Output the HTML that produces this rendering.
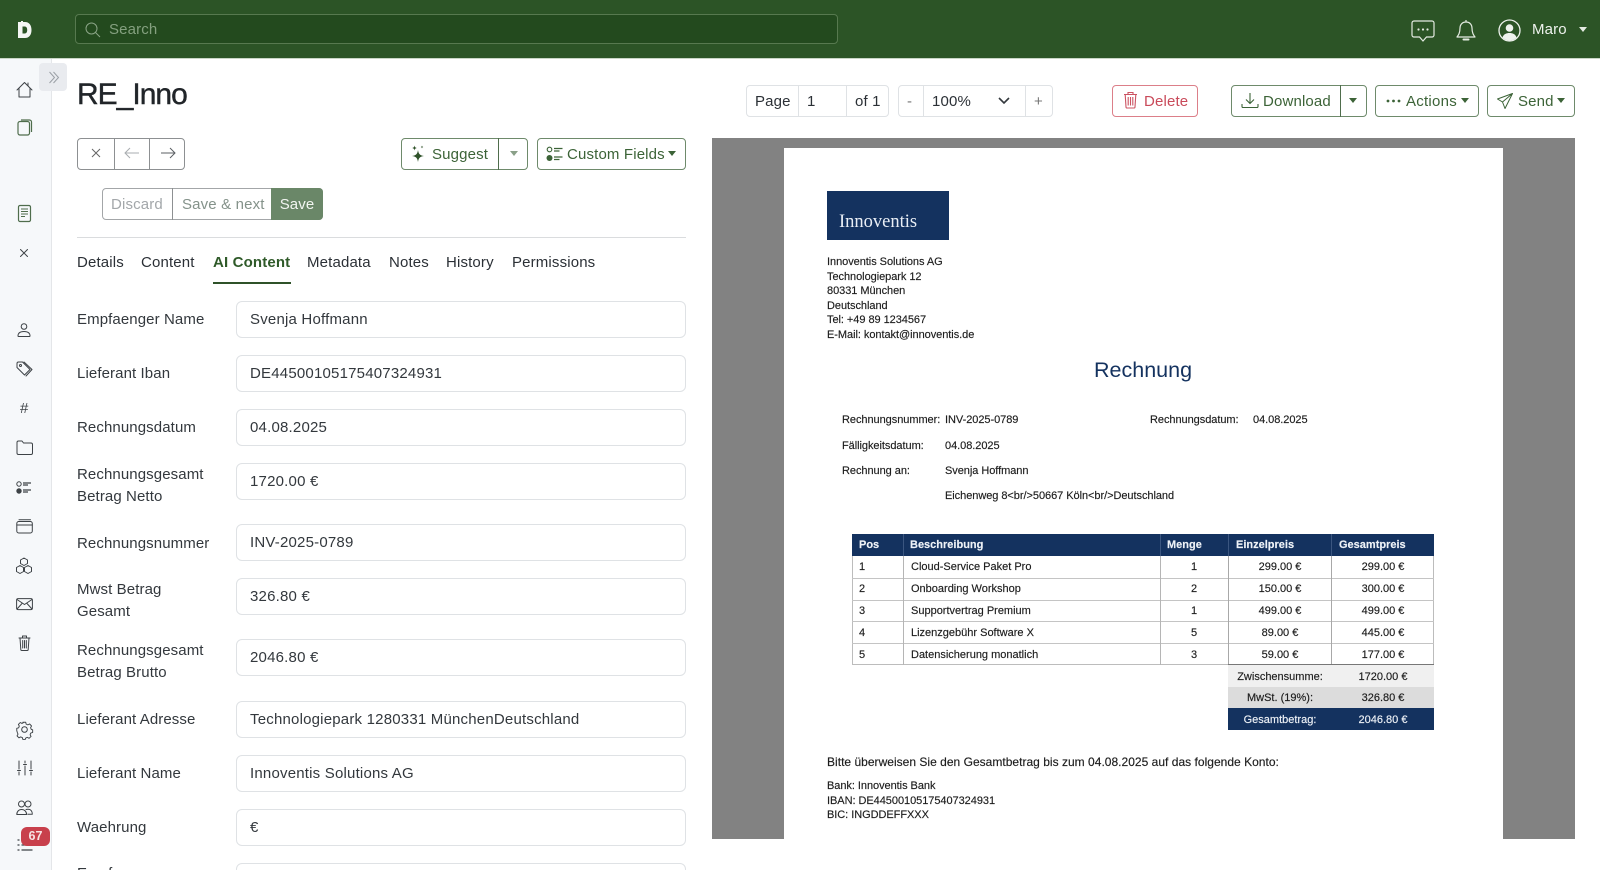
<!DOCTYPE html>
<html><head><meta charset="utf-8"><style>
*{box-sizing:border-box}
html,body{margin:0;padding:0;width:1600px;height:870px;overflow:hidden;background:#fff;font-family:"Liberation Sans",sans-serif;color:#2b3036}
#w{position:relative;width:1600px;height:870px;overflow:hidden;background:#fff}
.a{position:absolute;white-space:nowrap}
.t{position:absolute;white-space:nowrap;font-size:15px;line-height:20px;letter-spacing:.15px;margin-top:1px}
.tb{margin-top:.5px}
.b{position:absolute;border:1px solid #6e8a6b;border-radius:4px;background:#fff}
.g{color:#3c6337}
.lb{position:absolute;left:77px;font-size:15px;line-height:22px;letter-spacing:.1px;white-space:nowrap;color:#33383d;margin-top:.5px}
.in{position:absolute;left:236px;width:450px;height:37px;border:1px solid #dfe2e5;border-radius:6px;font-size:15px;line-height:36px;padding-left:13px;letter-spacing:.2px;color:#33383d;white-space:nowrap}
.p{position:absolute;white-space:nowrap;font-size:11px;line-height:14px;color:#1c1c1c;letter-spacing:-.05px;margin-top:.5px;-webkit-text-stroke:.15px #1c1c1c}
.tc{position:absolute;white-space:nowrap;font-size:11px;line-height:14px;color:#1c1c1c;margin-top:-.5px;-webkit-text-stroke:.15px currentColor}
.cen{text-align:center;transform:translateX(-50%)}
svg{position:absolute;fill:none;overflow:visible}
.s{stroke:#3d4246;stroke-width:1;stroke-linecap:round;stroke-linejoin:round}
.car{position:absolute;width:0;height:0;border-left:4.500px solid transparent;border-right:4.500px solid transparent;border-top:5px solid #3c6337}
.vl{position:absolute;width:1px}
</style></head><body><div id="w">

<!-- header -->
<div class="a" style="left:0;top:0;width:1600px;height:59px;background:#2c5426;border-bottom:1px solid #c9d6c6"></div>
<svg style="left:17px;top:21px" width="16" height="18" viewBox="0 0 16 18"><path fill="#f4f6f3" fill-rule="evenodd" d="M1 1h3V0h2v1h2c4 0 6.500 3 6.500 8s-2.500 8-6.500 8H1zM5.500 5.500v7H7.500c1.800 0 2.700-1.200 2.700-3.500S9.300 5.500 7.500 5.500z"/></svg>
<div class="a" style="left:75px;top:14px;width:763px;height:30px;background:#234a1e;border:1px solid #57794f;border-radius:4px"></div>
<svg style="left:85px;top:22px" width="16" height="16" viewBox="0 0 16 16"><circle cx="6.500" cy="6.500" r="5.500" stroke="#8ba587"/><path d="M10.500 10.500L15 15" stroke="#8ba587"/></svg>
<div class="t" style="left:109px;top:19px;color:#84a07f">Search</div>

<svg style="left:1411px;top:20px" width="24" height="22" viewBox="0 0 24 22"><path d="M3 1h18a2 2 0 0 1 2 2v12a2 2 0 0 1-2 2h-5.500L12 21l-3.500-4H3a2 2 0 0 1-2-2V3a2 2 0 0 1 2-2z" stroke="#e4ebe2" stroke-width="1.200"/><circle cx="7.500" cy="9.500" r="1.100" fill="#e4ebe2"/><circle cx="12" cy="9.500" r="1.100" fill="#e4ebe2"/><circle cx="16.500" cy="9.500" r="1.100" fill="#e4ebe2"/></svg>
<svg style="left:1456px;top:19px" width="20" height="23" viewBox="0 0 20 23"><path d="M10 1v2M10 3c-4 0-6 3-6 6 0 5-1.500 7-3 9h18c-1.500-2-3-4-3-9 0-3-2-6-6-6z" stroke="#e4ebe2" stroke-width="1.200" stroke-linejoin="round"/><path d="M7.500 20.500h5" stroke="#e4ebe2" stroke-width="2" stroke-linecap="round"/></svg>
<svg style="left:1498px;top:19px" width="23" height="23" viewBox="0 0 23 23"><circle cx="11.500" cy="11.500" r="10.500" stroke="#eef2ed" stroke-width="1.300"/><circle cx="11.500" cy="9" r="3.800" fill="#eef2ed"/><path d="M4.500 18.500c1-3.500 4-4.500 7-4.500s6 1 7 4.500c-2 2-4.500 3-7 3s-5-1-7-3z" fill="#eef2ed"/></svg>
<div class="t" style="left:1532px;top:19px;color:#eef2ed">Maro</div>
<div class="car" style="left:1579px;top:27px;border-top-color:#e4ebe2"></div>

<!-- sidebar -->
<div class="a" style="left:0;top:59px;width:52px;height:811px;background:#f6f8fa;border-right:1px solid #e4e6e9"></div>
<div class="a" style="left:39px;top:63px;width:28px;height:28px;background:#e9ebef;border-radius:4px"></div>
<svg style="left:48px;top:71px" width="12" height="13" viewBox="0 0 12 13"><path d="M1.500 1l5 5.500-5 5.500M5.500 1l5 5.500-5 5.500" stroke="#9a9fa5"/></svg>

<svg class="s" style="left:16px;top:81px" width="17" height="17" viewBox="0 0 17 17"><path d="M1 9L8.500 1.500 16 9M3 7v9h11V7M12 2v3"/></svg>
<svg style="left:17px;top:119px" width="16" height="17" viewBox="0 0 16 17"><rect x="1" y="2.500" width="11.500" height="13.500" rx="2" stroke="#4f6d4c" stroke-width="1.200"/><path d="M4 1h8.500a2 2 0 0 1 2 2v10" stroke="#4f6d4c" stroke-width="1.200"/></svg>
<svg style="left:18px;top:205px" width="13" height="17" viewBox="0 0 13 17"><rect x=".5" y=".5" width="12" height="16" rx="1.500" stroke="#4f6d4c" stroke-width="1.200"/><path d="M3 4h7M3 6.500h7M3 9h7M3 11.500h4" stroke="#4f6d4c"/></svg>
<svg class="s" style="left:20px;top:249px" width="8" height="8" viewBox="0 0 8 8"><path d="M.5.500l7 7M7.500.500l-7 7"/></svg>

<svg class="s" style="left:17px;top:323px" width="14" height="14" viewBox="0 0 14 14"><circle cx="7" cy="3.500" r="2.800"/><path d="M1 13c0-3 2-4.500 6-4.500s6 1.500 6 4.500c0 .5-.5.500-.5.500h-11s-.5 0-.5-.5z"/></svg>
<svg class="s" style="left:16px;top:361px" width="17" height="17" viewBox="0 0 17 17"><path d="M1 2.500a1.500 1.500 0 0 1 1.500-1.500h4L14 8.500 8.500 14 1 6.500z"/><path d="M8 1l8 7.500-6 6.500"/><circle cx="4.500" cy="4.500" r="1"/></svg>
<div class="a" style="left:20px;top:400px;font-size:15px;line-height:17px;color:#3d4246">#</div>
<svg class="s" style="left:16px;top:440px" width="17" height="15" viewBox="0 0 17 15"><path d="M1 2.500A1.500 1.500 0 0 1 2.500 1h3.500l1.500 2H15a1.500 1.500 0 0 1 1.500 1.500V13a1.500 1.500 0 0 1-1.500 1.500H2.500A1.500 1.500 0 0 1 1 13z"/></svg>
<svg style="left:16px;top:481px" width="16" height="13" viewBox="0 0 16 13"><circle cx="3" cy="3" r="2.200" stroke="#3d4246"/><circle cx="3" cy="10" r="2.700" fill="#3d4246"/><path d="M7 2h8M7 4h5M7 9h8M7 11h5" stroke="#3d4246" stroke-width="1.200"/></svg>
<svg class="s" style="left:16px;top:519px" width="17" height="15" viewBox="0 0 17 15"><rect x=".8" y="2.500" width="15.500" height="11.500" rx="2"/><path d="M3 .8h11.500M.8 6h15.500"/></svg>
<svg class="s" style="left:15px;top:557px" width="18" height="18" viewBox="0 0 18 18"><path d="M9 1l3.500 2v3.500L9 8.500l-3.500-2V3zM5 8.500L8.500 10.500v4L5 16.500l-3.500-2v-4zM13 8.500l3.500 2v4L13 16.500l-3.500-2v-4z"/></svg>
<svg class="s" style="left:16px;top:598px" width="17" height="12" viewBox="0 0 17 12"><rect x=".6" y=".6" width="15.800" height="11" rx="1.500"/><path d="M1 1.500L8.500 6.500 16 1.500M1 11l5-5.500M16 11l-5-5.500"/></svg>
<svg class="s" style="left:18px;top:635px" width="13" height="16" viewBox="0 0 13 16"><path d="M1 3h11M2 3l.8 11.500a1 1 0 0 0 1 1h5.400a1 1 0 0 0 1-1L11 3M4.500 3V1h4v2M4.700 5.500v7.500M6.500 5.500v7.500M8.300 5.500v7.500"/></svg>

<svg class="s" style="left:16px;top:721px" width="17" height="17" viewBox="0 0 17 17"><circle cx="8.500" cy="8.500" r="2.800"/><path d="M7 1h3l.5 2 1.800.8 1.900-1 2 2.200-1 1.800.7 1.800 1.500.5v2.800l-2 .6-.7 1.800 1 1.800-2.100 2-1.800-1-1.800.7-.5 1.500H7l-.6-2-1.800-.7-1.800 1-2-2.100 1-1.800-.7-1.800L.5 10V7.500l2-.6.7-1.800-1-1.800 2-2 1.800 1 1.500-.8z" transform="translate(.3 .3) scale(.94)"/></svg>
<svg class="s" style="left:17px;top:760px" width="16" height="16" viewBox="0 0 16 16"><path d="M2 1v8M2 12v3M8 1v2M8 6v9M14 1v8M14 12v3M.5 10.500h3M6.500 4.500h3M12.500 10.500h3"/></svg>
<svg class="s" style="left:16px;top:800px" width="17" height="16" viewBox="0 0 17 16"><circle cx="5.500" cy="4" r="3"/><circle cx="12" cy="4" r="3"/><path d="M.8 14.500c0-3 2-5 4.800-5s5 2 5 5zM10 9.500c.5-.2 1.200-.3 2-.3 2.800 0 4.300 2 4.300 5h-4.500"/></svg>
<svg class="s" style="left:17px;top:838px" width="16" height="14" viewBox="0 0 16 14"><path d="M5 2h10M5 7h10M5 12h10M1 2h1M1 7h1M1 12h1" stroke-width="1.300"/></svg>
<div class="a" style="left:21px;top:827px;width:29px;height:19px;background:#c8404c;border-radius:6px;color:#f7e3e5;font-size:12.500px;font-weight:bold;text-align:center;line-height:18px">67</div>

<!-- title -->
<div class="a" style="left:77px;top:76px;font-size:30px;line-height:38px;letter-spacing:-1px;color:#212529;-webkit-text-stroke:.4px #212529">RE_Inno</div>

<!-- nav group -->
<div class="b" style="left:77px;top:138px;width:108px;height:32px;border-color:#8d9092"></div>
<div class="vl" style="left:114px;top:138px;height:32px;background:#8d9092"></div>
<div class="vl" style="left:149px;top:138px;height:32px;background:#8d9092"></div>
<svg style="left:92px;top:149px" width="8" height="8" viewBox="0 0 8 8"><path d="M0 0l8 8M8 0L0 8" stroke="#666"/></svg>
<svg style="left:124px;top:147px" width="16" height="12" viewBox="0 0 16 12"><path d="M15 6H1M6 1L1 6l5 5" stroke="#a9adb0"/></svg>
<svg style="left:160px;top:147px" width="16" height="12" viewBox="0 0 16 12"><path d="M1 6h14M10 1l5 5-5 5" stroke="#5b5f63"/></svg>

<div class="b" style="left:102px;top:188px;width:221px;height:32px;border-color:#a3a6a8"></div>
<div class="vl" style="left:172px;top:188px;height:32px;background:#8d9092"></div>
<div class="a" style="left:271px;top:188px;width:52px;height:32px;background:#6a8768;border-radius:0 4px 4px 0;color:#f2f5f1;font-size:15px;line-height:33px;text-align:center;letter-spacing:.1px">Save</div>
<div class="t" style="left:111px;top:194px;color:#a3a7aa">Discard</div>
<div class="t" style="left:182px;top:194px;color:#84928a">Save &amp; next</div>

<!-- suggest / custom -->
<div class="b" style="left:401px;top:138px;width:127px;height:32px"></div>
<div class="vl" style="left:498px;top:138px;height:32px;background:#4f6d4c"></div>
<svg style="left:410px;top:144px" width="17" height="20" viewBox="0 0 17 20"><path d="M8 6c.6 4 1.800 5.300 6 6-4.200.7-5.400 2-6 6-.6-4-1.800-5.300-6-6 4.200-.7 5.400-2 6-6zM4.500 1.500c.3 1.600.8 2.200 2.500 2.500-1.700.3-2.200.9-2.500 2.500C4.200 4.900 3.700 4.300 2 4c1.700-.3 2.200-.9 2.500-2.500zM12 1.500c.2 1 .4 1.300 1.400 1.500-1 .2-1.200.5-1.400 1.500-.2-1-.4-1.300-1.400-1.500 1-.2 1.200-.5 1.400-1.500z" fill="#2f5229"/></svg>
<div class="t g" style="left:432px;top:144px">Suggest</div>
<div class="car" style="left:510px;top:151px;border-top-color:#8aa088"></div>
<div class="b" style="left:537px;top:138px;width:149px;height:32px"></div>
<svg style="left:546px;top:146px" width="17" height="16" viewBox="0 0 17 16"><circle cx="3.500" cy="3.500" r="2.300" stroke="#3c6337" stroke-width="1.100"/><circle cx="3.500" cy="12" r="3" fill="#3c6337"/><path d="M8 2.500h8.500M8 5h5.500M8 11h8.500M8 13.500h5.500" stroke="#3c6337" stroke-width="1.200"/></svg>
<div class="t g" style="left:567px;top:144px">Custom Fields</div>
<div class="car" style="left:668px;top:151px"></div>

<div class="a" style="left:77px;top:237px;width:609px;height:1px;background:#dadcde"></div>

<!-- tabs -->
<div class="t tb" style="left:77px;top:252px">Details</div>
<div class="t tb" style="left:141px;top:252px">Content</div>
<div class="t tb" style="left:213px;top:252px;font-weight:bold;color:#2f5a29;letter-spacing:.15px">AI Content</div>
<div class="a" style="left:213px;top:282px;width:78px;height:2px;background:#2f5229"></div>
<div class="t tb" style="left:307px;top:252px">Metadata</div>
<div class="t tb" style="left:389px;top:252px">Notes</div>
<div class="t tb" style="left:446px;top:252px">History</div>
<div class="t tb" style="left:512px;top:252px">Permissions</div>

<!-- form -->
<div class="lb" style="top:308px">Empfaenger Name</div><div class="in" style="top:301px">Svenja Hoffmann</div>
<div class="lb" style="top:362px">Lieferant Iban</div><div class="in" style="top:355px">DE44500105175407324931</div>
<div class="lb" style="top:416px">Rechnungsdatum</div><div class="in" style="top:409px">04.08.2025</div>
<div class="lb" style="top:463px">Rechnungsgesamt</div><div class="lb" style="top:485px">Betrag Netto</div><div class="in" style="top:463px">1720.00 €</div>
<div class="lb" style="top:532px">Rechnungsnummer</div><div class="in" style="top:524px">INV-2025-0789</div>
<div class="lb" style="top:578px">Mwst Betrag</div><div class="lb" style="top:600px">Gesamt</div><div class="in" style="top:578px">326.80 €</div>
<div class="lb" style="top:639px">Rechnungsgesamt</div><div class="lb" style="top:661px">Betrag Brutto</div><div class="in" style="top:639px">2046.80 €</div>
<div class="lb" style="top:708px">Lieferant Adresse</div><div class="in" style="top:701px">Technologiepark 1280331 MünchenDeutschland</div>
<div class="lb" style="top:762px">Lieferant Name</div><div class="in" style="top:755px">Innoventis Solutions AG</div>
<div class="lb" style="top:816px">Waehrung</div><div class="in" style="top:809px">€</div>
<div class="lb" style="top:862px">Empfaenger</div><div class="in" style="top:863px"></div>

<!-- pdf toolbar -->
<div class="b" style="left:746px;top:85px;width:143px;height:32px;border-color:#dfe2e5"></div>
<div class="vl" style="left:798px;top:85px;height:32px;background:#dfe2e5"></div>
<div class="vl" style="left:846px;top:85px;height:32px;background:#dfe2e5"></div>
<div class="t" style="left:755px;top:91px">Page</div>
<div class="t" style="left:807px;top:91px">1</div>
<div class="t" style="left:855px;top:91px">of 1</div>
<div class="b" style="left:898px;top:85px;width:155px;height:32px;border-color:#dfe2e5"></div>
<div class="vl" style="left:923px;top:85px;height:32px;background:#dfe2e5"></div>
<div class="vl" style="left:1025px;top:85px;height:32px;background:#dfe2e5"></div>
<div class="t" style="left:907px;top:91px;color:#777">-</div>
<div class="t" style="left:932px;top:91px">100%</div>
<svg style="left:998px;top:97px" width="12" height="8" viewBox="0 0 12 8"><path d="M1 1l5 5 5-5" stroke="#33383d" stroke-width="1.600"/></svg>
<div class="t" style="left:1034px;top:91px;color:#777">+</div>

<div class="b" style="left:1112px;top:85px;width:86px;height:32px;border-color:#dc7f89"></div>
<svg style="left:1123px;top:91px" width="15" height="18" viewBox="0 0 15 18"><path d="M1 3.500h13M2.200 3.500l.8 12.500a1 1 0 0 0 1 1h7a1 1 0 0 0 1-1l.8-12.500M5 3.500V1.500h5v2M5.200 6v8.500M7.500 6v8.500M9.800 6v8.500" stroke="#cc5261" stroke-width="1.100"/></svg>
<div class="t" style="left:1144px;top:91px;color:#c94a5a">Delete</div>

<div class="b" style="left:1231px;top:85px;width:136px;height:32px"></div>
<div class="vl" style="left:1340px;top:85px;height:32px;background:#4f6d4c"></div>
<svg style="left:1241px;top:92px" width="18" height="17" viewBox="0 0 18 17"><path d="M9 1v10M5 7.500L9 11.500l4-4M1 12v2.500a1 1 0 0 0 1 1h14a1 1 0 0 0 1-1V12" stroke="#3c6337" stroke-width="1.100"/></svg>
<div class="t g" style="left:1263px;top:91px">Download</div>
<div class="car" style="left:1349px;top:98px"></div>
<div class="b" style="left:1375px;top:85px;width:104px;height:32px"></div>
<svg style="left:1386px;top:99px" width="15" height="4" viewBox="0 0 15 4"><circle cx="2" cy="2" r="1.400" fill="#3c6337"/><circle cx="7.500" cy="2" r="1.400" fill="#3c6337"/><circle cx="13" cy="2" r="1.400" fill="#3c6337"/></svg>
<div class="t g" style="left:1406px;top:91px;letter-spacing:.25px">Actions</div>
<div class="car" style="left:1461px;top:98px"></div>
<div class="b" style="left:1487px;top:85px;width:88px;height:32px"></div>
<svg style="left:1497px;top:93px" width="16" height="16" viewBox="0 0 16 16"><path d="M15.500.500L.5 6l5 3 2.500 6.500zM5.500 9L15.500.5" stroke="#3c6337" stroke-linejoin="round"/></svg>
<div class="t g" style="left:1518px;top:91px">Send</div>
<div class="car" style="left:1557px;top:98px"></div>

<!-- pdf -->
<div class="a" style="left:712px;top:138px;width:863px;height:701px;background:#828282"></div>
<div class="a" style="left:784px;top:148px;width:719px;height:691px;background:#fff"></div>
<div class="a" style="left:827px;top:191px;width:122px;height:49px;background:#14325f"></div>
<div class="a" style="left:839px;top:211px;font-family:'Liberation Serif',serif;font-size:18.500px;line-height:22px;color:#e9eef5">Innoventis</div>

<div class="p" style="left:827px;top:254px">Innoventis Solutions AG</div>
<div class="p" style="left:827px;top:269px">Technologiepark 12</div>
<div class="p" style="left:827px;top:283px">80331 München</div>
<div class="p" style="left:827px;top:298px">Deutschland</div>
<div class="p" style="left:827px;top:312px">Tel: +49 89 1234567</div>
<div class="p" style="left:827px;top:327px">E-Mail: kontakt@innoventis.de</div>

<div class="a" style="left:1094px;top:357px;font-size:21.500px;line-height:26px;color:#14325f">Rechnung</div>

<div class="p" style="left:842px;top:412px">Rechnungsnummer:</div><div class="p" style="left:945px;top:412px">INV-2025-0789</div>
<div class="p" style="left:1150px;top:412px">Rechnungsdatum:</div><div class="p" style="left:1253px;top:412px">04.08.2025</div>
<div class="p" style="left:842px;top:438px">Fälligkeitsdatum:</div><div class="p" style="left:945px;top:438px">04.08.2025</div>
<div class="p" style="left:842px;top:463px">Rechnung an:</div><div class="p" style="left:945px;top:463px">Svenja Hoffmann</div>
<div class="p" style="left:945px;top:488px">Eichenweg 8&lt;br/&gt;50667 Köln&lt;br/&gt;Deutschland</div>

<!-- table -->
<div class="a" style="left:852px;top:534px;width:582px;height:22px;background:#14325f"></div>
<div class="a" style="left:852px;top:556px;width:582px;height:109px;border:1px solid #bcbcbc;border-top:none"></div>
<div class="a" style="left:852px;top:578px;width:582px;height:1px;background:#c4c4c4"></div>
<div class="a" style="left:852px;top:600px;width:582px;height:1px;background:#c4c4c4"></div>
<div class="a" style="left:852px;top:621px;width:582px;height:1px;background:#c4c4c4"></div>
<div class="a" style="left:852px;top:643px;width:582px;height:1px;background:#c4c4c4"></div>
<div class="vl" style="left:903px;top:534px;height:131px;background:#b5b5b5"></div>
<div class="vl" style="left:1160px;top:534px;height:131px;background:#b5b5b5"></div>
<div class="vl" style="left:1228px;top:534px;height:131px;background:#a8a8a8"></div>
<div class="vl" style="left:1331px;top:534px;height:131px;background:#a8a8a8"></div>
<div class="vl" style="left:903px;top:534px;height:22px;background:#3b5680"></div>
<div class="vl" style="left:1160px;top:534px;height:22px;background:#3b5680"></div>
<div class="vl" style="left:1228px;top:534px;height:22px;background:#3b5680"></div>
<div class="vl" style="left:1331px;top:534px;height:22px;background:#3b5680"></div>
<div class="a" style="left:1228px;top:664px;width:206px;height:1px;background:#777"></div>

<div class="tc" style="left:859px;top:538px;color:#eef2f7;font-weight:bold">Pos</div>
<div class="tc" style="left:910px;top:538px;color:#eef2f7;font-weight:bold">Beschreibung</div>
<div class="tc" style="left:1167px;top:538px;color:#eef2f7;font-weight:bold">Menge</div>
<div class="tc" style="left:1236px;top:538px;color:#eef2f7;font-weight:bold">Einzelpreis</div>
<div class="tc" style="left:1339px;top:538px;color:#eef2f7;font-weight:bold">Gesamtpreis</div>

<div class="tc" style="left:859px;top:560px">1</div><div class="tc" style="left:911px;top:560px">Cloud-Service Paket Pro</div><div class="tc cen" style="left:1194px;top:560px">1</div><div class="tc cen" style="left:1280px;top:560px">299.00 €</div><div class="tc cen" style="left:1383px;top:560px">299.00 €</div>
<div class="tc" style="left:859px;top:582.500px">2</div><div class="tc" style="left:911px;top:582.500px">Onboarding Workshop</div><div class="tc cen" style="left:1194px;top:582.500px">2</div><div class="tc cen" style="left:1280px;top:582.500px">150.00 €</div><div class="tc cen" style="left:1383px;top:582.500px">300.00 €</div>
<div class="tc" style="left:859px;top:604px">3</div><div class="tc" style="left:911px;top:604px">Supportvertrag Premium</div><div class="tc cen" style="left:1194px;top:604px">1</div><div class="tc cen" style="left:1280px;top:604px">499.00 €</div><div class="tc cen" style="left:1383px;top:604px">499.00 €</div>
<div class="tc" style="left:859px;top:626px">4</div><div class="tc" style="left:911px;top:626px">Lizenzgebühr Software X</div><div class="tc cen" style="left:1194px;top:626px">5</div><div class="tc cen" style="left:1280px;top:626px">89.00 €</div><div class="tc cen" style="left:1383px;top:626px">445.00 €</div>
<div class="tc" style="left:859px;top:648px">5</div><div class="tc" style="left:911px;top:648px">Datensicherung monatlich</div><div class="tc cen" style="left:1194px;top:648px">3</div><div class="tc cen" style="left:1280px;top:648px">59.00 €</div><div class="tc cen" style="left:1383px;top:648px">177.00 €</div>

<div class="a" style="left:1228px;top:665px;width:206px;height:22px;background:#f0f0f0"></div>
<div class="a" style="left:1228px;top:687px;width:206px;height:21px;background:#dcdcdc"></div>
<div class="a" style="left:1228px;top:708px;width:206px;height:22px;background:#14325f"></div>
<div class="tc cen" style="left:1280px;top:670px">Zwischensumme:</div><div class="tc cen" style="left:1383px;top:670px">1720.00 €</div>
<div class="tc cen" style="left:1280px;top:691px">MwSt. (19%):</div><div class="tc cen" style="left:1383px;top:691px">326.80 €</div>
<div class="tc cen" style="left:1280px;top:713px;color:#eef2f7">Gesamtbetrag:</div><div class="tc cen" style="left:1383px;top:713px;color:#eef2f7">2046.80 €</div>

<div class="a" style="left:827px;top:755px;font-size:12px;line-height:14px;color:#1c1c1c;letter-spacing:.02px;-webkit-text-stroke:.15px #1c1c1c">Bitte überweisen Sie den Gesamtbetrag bis zum 04.08.2025 auf das folgende Konto:</div>
<div class="p" style="left:827px;top:778px">Bank: Innoventis Bank</div>
<div class="p" style="left:827px;top:793px">IBAN: DE44500105175407324931</div>
<div class="p" style="left:827px;top:807px">BIC: INGDDEFFXXX</div>
</div></body></html>
